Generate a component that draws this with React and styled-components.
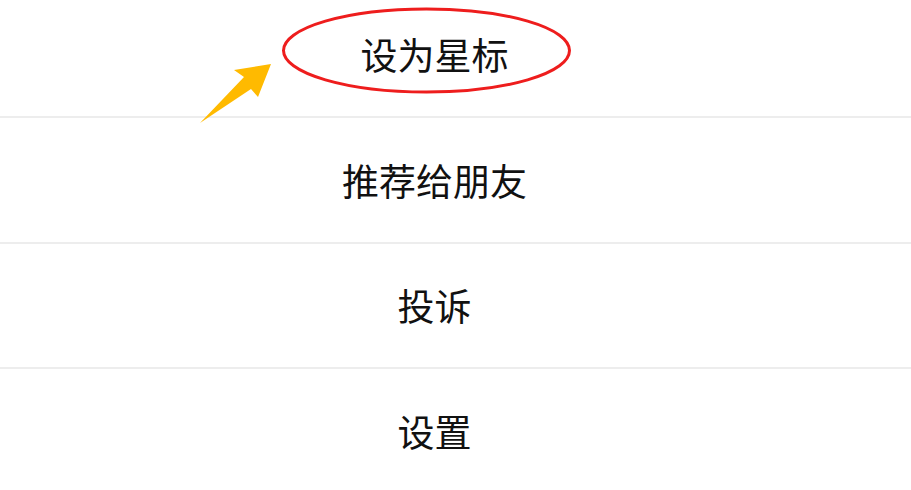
import React from 'react'
import styled, { createGlobalStyle } from 'styled-components'

const GlobalStyle = createGlobalStyle`
      html, body {
            margin : 0;
            padding : 0;
            background-color : #ffffff;
      }
      body {
            width : 911px;
            height : 490px;
            overflow : hidden;
            font-family : "Noto Sans CJK SC", "Noto Sans", sans-serif;
      }
`

const Page = styled.div`
      position : relative;
      width : 911px;
      height : 490px;
      overflow : hidden;
      background-color : #ffffff;
`

const Menu = styled.ul`
      list-style : none;
      margin : -7.5px 0 0 0;
      padding : 0;
`

const Item = styled.li`
      display : flex;
      align-items : center;
      justify-content : center;
      height : 123.5px;
      padding-right : 42px;
      border-bottom : 2px solid #ededed;
      font-size : 37px;
      font-weight : 400;
      color : #111111;
      letter-spacing : 0;
`

const Annotation = styled.svg`
      position : absolute;
      left : 0;
      top : 0;
      width : 911px;
      height : 490px;
      pointer-events : none;
`

const items = ['设为星标', '推荐给朋友', '投诉', '设置']

function App() {
      return (
            <Page>
                  <GlobalStyle />
                  <Menu>
                        {items.map(label => (
                              <Item key={label}>{label}</Item>
                        ))}
                  </Menu>
                  <Annotation viewBox="0 0 911 490">
                        <ellipse cx="426.5" cy="50.5" rx="143" ry="41.5" fill="none" stroke="#ee1d1d" strokeWidth="3" />
                        <polygon
                              points="271,64 234,70 244,77 200,123 251,89 258,97"
                              fill="#ffba00"
                        />
                  </Annotation>
            </Page>
      )
}

export default App
